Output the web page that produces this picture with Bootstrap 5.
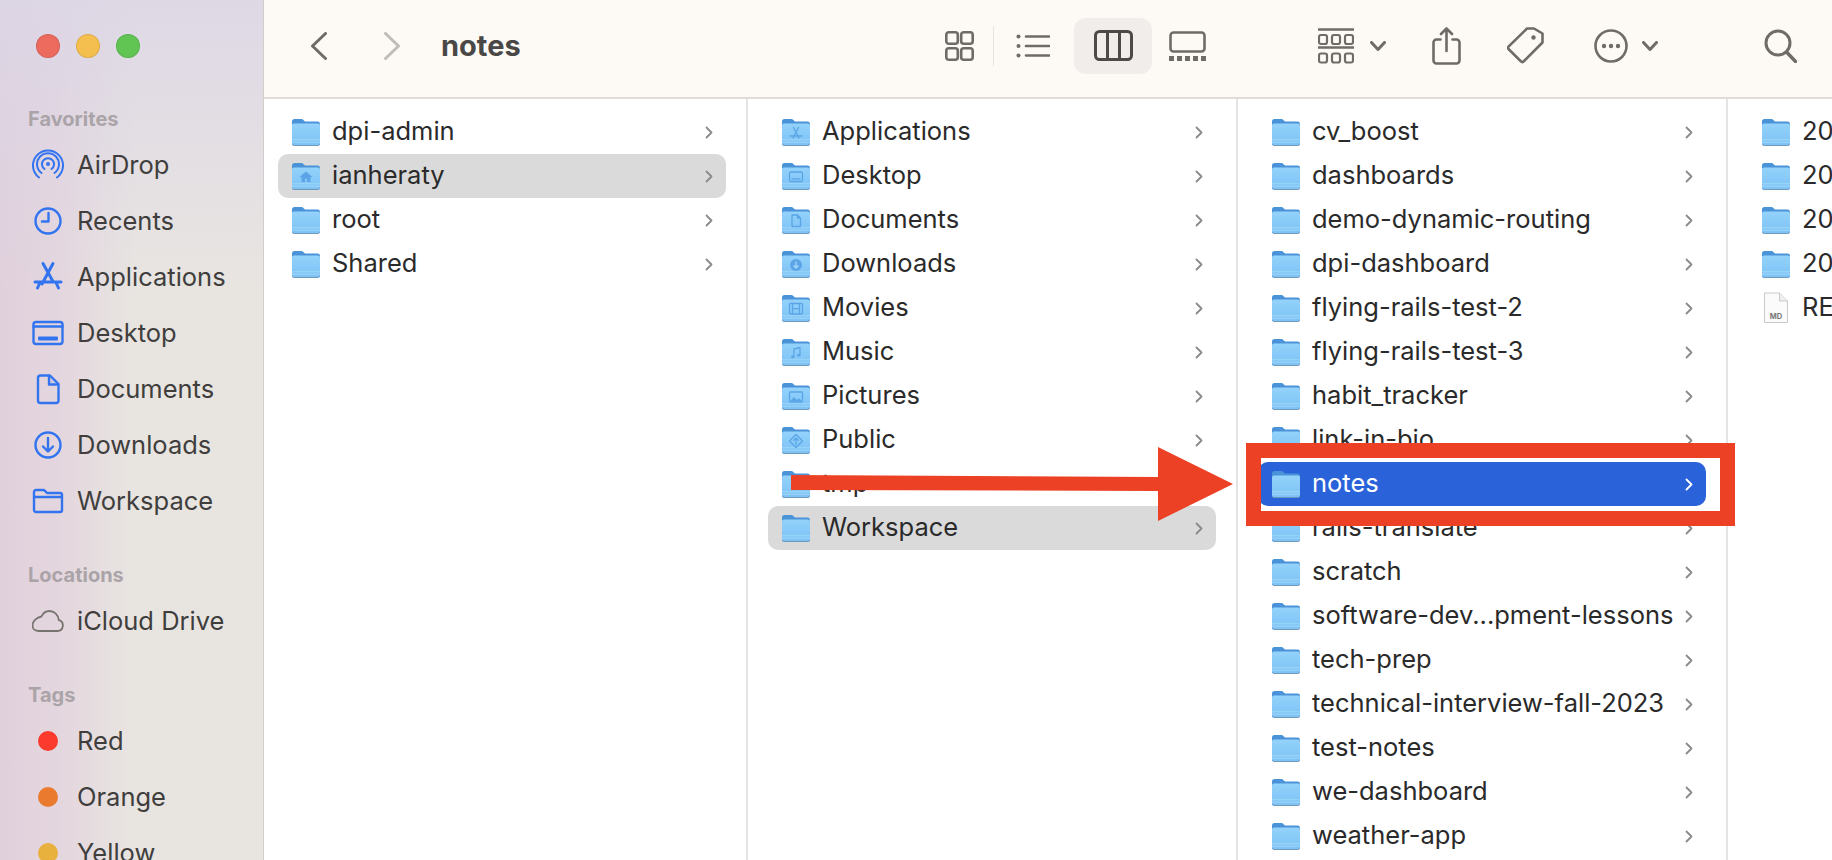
<!DOCTYPE html>
<html lang="en">
<head>
  <meta charset="UTF-8">
  <title>notes</title>
  <link href="https://cdn.jsdelivr.net/npm/bootstrap@5.3.3/dist/css/bootstrap.min.css" rel="stylesheet">
  <style>
    html, body { height: 860px; overflow: hidden; background: #fff; }
    body { position: relative; font-family: Inter, "Liberation Sans", sans-serif; font-size: 25.5px; color: #2a2a2a; }

    /* sidebar */
    .side-pane {
      width: 264px; flex: none; height: 860px; overflow: hidden;
      border-right: 1px solid #d0cecb; color: #403e3d;
      background:
        linear-gradient(180deg, rgba(220,214,230,.85) 0, rgba(226,210,220,0) 34%),
        linear-gradient(90deg, #e0d0dc 0, #e4d6de 60px, #e8e5e1 135px);
    }
    .lights { padding: 34px 0 0 36px; gap: 16px; margin-bottom: 47px; }
    .light { width: 24px; height: 24px; border-radius: 50%; border: 1px solid rgba(0,0,0,.1); }
    .light-r { background: #ed6a5e; }
    .light-y { background: #f5bf4f; }
    .light-g { background: #61c554; }
    .side-label { height: 28px; line-height: 28px; padding-left: 28px; font-size: 20px; font-weight: 700; color: #aaa4a8; margin-bottom: 4px; }
    .side-label-next { margin-top: 32px; }
    .side-row { height: 56px; padding-left: 32px; gap: 13px; white-space: nowrap; }
    .side-row svg { flex: none; }
    .tag-dot { width: 20px; height: 20px; border-radius: 50%; margin: 0 6px; flex: none; }
    .tag-red { background: #fc3a2e; }
    .tag-orange { background: #e97a2e; }
    .tag-yellow { background: #e8b03c; }
    .side-ic { fill: none; stroke: #3274f0; stroke-width: 2.4; stroke-linecap: round; stroke-linejoin: round; }

    /* toolbar */
    .top-bar { height: 99px; flex: none; background: #fdfaf6; border-bottom: 2px solid #dfddda; padding: 0 0 6px 47px; }
    .top-bar svg { flex: none; }
    .tb-line { fill: none; stroke: #6f6b66; stroke-width: 2.6; stroke-linecap: round; stroke-linejoin: round; }
    .tb-fill { fill: #6f6b66; }
    .tb-title { font-size: 29px; font-weight: 700; color: #4a4846; width: 78px; margin-left: 41px; margin-right: 426px; line-height: 1; }
    .tb-sep { width: 1px; height: 40px; background: #e6e3df; margin: 0 22px 0 19px; flex: none; }
    .tb-active { width: 78px; height: 56px; border-radius: 12px; background: #f0edea; margin-left: 24px; }
    .mg-14 { margin-left: 14px; }
    .mg-16 { margin-left: 16px; }
    .mg-17 { margin-left: 17px; }
    .mg-46 { margin-left: 46px; }
    .mg-50 { margin-left: 50px; }
    .mg-57 { margin-left: 57px; }
    .mg-106 { margin-left: 106px; }
    .mg-112 { margin-left: 112px; }

    /* columns */
    .col-pane { width: 490px; flex: none; padding-top: 11px; border-right: 2px solid #e4e4e4; height: 761px; overflow: hidden; }
    .col-first { width: 484px; }
    .col-last { flex: 1 1 auto; width: auto; border-right: 0; }
    .file-row { height: 44px; margin: 0 20px; padding: 0 13px 0 14px; border-radius: 10px; white-space: nowrap; }
    .col-first .file-row { margin-left: 14px; }
    .file-row > svg:first-child { flex: none; margin-right: 12px; }
    .file-name { flex: 1 1 auto; min-width: 0; overflow: hidden; padding-bottom: 2px; }
    .row-gray { background: #dadada; }
    .row-blue { background: #2962d9; color: #fff; }
    .row-blue .arrow-next { stroke: #fff; }
    .arrow-next { fill: none; stroke: #8a8a8a; stroke-width: 1.8; stroke-linecap: round; stroke-linejoin: round; flex: none; }
    .glyph { fill: none; stroke: #5ba5e6; stroke-width: 1.3; stroke-linejoin: round; stroke-linecap: round; }
    .glyph-fill { fill: #5ba5e6; }

    /* red annotation on top of the window */
    .markup { position: absolute; left: 0; top: 0; pointer-events: none; }
  </style>
</head>
<body>
  <svg width="0" height="0" class="position-absolute">
    <defs>
      <linearGradient id="fbody" x1="0" y1="0" x2="0" y2="1">
        <stop offset="0" stop-color="#93d2fb"/>
        <stop offset="1" stop-color="#7cc2f5"/>
      </linearGradient>
      <symbol id="folder" viewBox="0 0 28 28">
        <path d="M0 3.500A2.500 2.500 0 0 1 2.500 1H9c1.200 0 1.800.5 2.600 1.300L13 3.600h12.600A2.400 2.400 0 0 1 28 6v19.400a2.400 2.400 0 0 1-2.400 2.400H2.400A2.400 2.400 0 0 1 0 25.400z" fill="#4a93d8"/>
        <path d="M0 7.500a2 2 0 0 1 2-2h24a2 2 0 0 1 2 2v17.700a2.200 2.200 0 0 1-2.200 2.200H2.200A2.200 2.200 0 0 1 0 25.200z" fill="url(#fbody)"/>
        <path d="M0 21.800h28M0 24.200h28" stroke="#a9dafb" stroke-width=".8"/>
        <path d="M.4 26.400c.4.900 1 1.200 2 1.200h23.200c1 0 1.600-.3 2-1.200" fill="none" stroke="#6f93b3" stroke-width=".9"/>
      </symbol>
      <symbol id="next" viewBox="0 0 8 13">
        <path d="M1.500 1.500 6.500 6.500 1.500 11.500"/>
      </symbol>
    </defs>
  </svg>

  <div class="d-flex">
    <div class="side-pane">
      <div class="lights d-flex">
        <div class="light light-r"></div>
        <div class="light light-y"></div>
        <div class="light light-g"></div>
      </div>

      <div class="side-label">Favorites</div>
      <div class="side-row d-flex align-items-center">
        <svg class="side-ic" width="32" height="32" viewBox="0 0 32 32"><circle cx="16" cy="15" r="2" fill="#3274f0" stroke="none"/><path d="M12.500 21a6 6 0 1 1 7 0M9.500 25a11 11 0 1 1 13 0M7 29.500a15 15 0 1 1 18 0" transform="translate(0 -1)" stroke-width="2"/></svg>
        <span>AirDrop</span>
      </div>
      <div class="side-row d-flex align-items-center">
        <svg class="side-ic" width="32" height="32" viewBox="0 0 32 32"><circle cx="16" cy="16" r="12.500"/><path d="M16.500 8v8.500H10"/></svg>
        <span>Recents</span>
      </div>
      <div class="side-row d-flex align-items-center">
        <svg class="side-ic" width="32" height="32" viewBox="0 0 32 32"><path d="M11 2.500 21 20.500M21 2.500 10 23M3 21h26M8 21.500 5.500 27M24 21.500l2.500 5.500" stroke-width="3"/></svg>
        <span>Applications</span>
      </div>
      <div class="side-row d-flex align-items-center">
        <svg class="side-ic" width="32" height="32" viewBox="0 0 32 32"><rect x="1.500" y="5" width="29" height="22" rx="2.500"/><path d="M1.500 9.500h29"/><rect x="6" y="19.500" width="20" height="4" rx="1" fill="#3274f0" stroke="none"/></svg>
        <span>Desktop</span>
      </div>
      <div class="side-row d-flex align-items-center">
        <svg class="side-ic" width="32" height="32" viewBox="0 0 32 32"><path d="M6 5a2.500 2.500 0 0 1 2.500-2.500H18L26.500 11v16.500A2.500 2.500 0 0 1 24 30H8.500A2.500 2.500 0 0 1 6 27.500z"/><path d="M17 3v8.500h9" fill="#3274f0" fill-opacity=".12"/></svg>
        <span>Documents</span>
      </div>
      <div class="side-row d-flex align-items-center">
        <svg class="side-ic" width="32" height="32" viewBox="0 0 32 32"><circle cx="16" cy="16" r="12.500"/><path d="M16 9v13M11 17.500l5 5 5-5"/></svg>
        <span>Downloads</span>
      </div>
      <div class="side-row d-flex align-items-center">
        <svg class="side-ic" width="32" height="32" viewBox="0 0 32 32"><path d="M2 7a2 2 0 0 1 2-2h7c1 0 1.500.4 2.200 1.100L15 8h13a2 2 0 0 1 2 2v15a2 2 0 0 1-2 2H4a2 2 0 0 1-2-2zM2 12h28"/></svg>
        <span>Workspace</span>
      </div>

      <div class="side-label side-label-next">Locations</div>
      <div class="side-row d-flex align-items-center">
        <svg width="32" height="32" viewBox="0 0 32 32" fill="none" stroke="#77736f" stroke-width="1.800" stroke-linejoin="round"><path d="M7 26h18.500a5.500 5.500 0 0 0 1.300-10.800C26.300 9.500 21.800 6 17.500 6c-3.700 0-6.500 2-8 5.500C5 12.500 .500 16 .500 20.500 .500 24 3.300 26 7 26z"/></svg>
        <span>iCloud Drive</span>
      </div>

      <div class="side-label side-label-next">Tags</div>
      <div class="side-row d-flex align-items-center"><div class="tag-dot tag-red"></div><span>Red</span></div>
      <div class="side-row d-flex align-items-center"><div class="tag-dot tag-orange"></div><span>Orange</span></div>
      <div class="side-row d-flex align-items-center"><div class="tag-dot tag-yellow"></div><span>Yellow</span></div>
    </div>

    <div class="flex-grow-1 d-flex flex-column">
      <div class="top-bar d-flex align-items-center">
        <svg class="tb-line" width="16" height="28" viewBox="0 0 16 28"><path d="M14.500 1.500 1.500 14l13 12.500" stroke-width="3"/></svg>
        <svg class="mg-57" width="16" height="28" viewBox="0 0 16 28"><path d="M1.500 1.500 14.500 14l-13 12.500" fill="none" stroke="#c0bdb9" stroke-width="3" stroke-linecap="round" stroke-linejoin="round"/></svg>
        <div class="tb-title">notes</div>

        <svg class="tb-line" width="29" height="30" viewBox="0 0 29 30"><rect x="1.300" y="1.300" width="11.500" height="11.500" rx="2.500"/><rect x="16.200" y="1.300" width="11.500" height="11.500" rx="2.500"/><rect x="1.300" y="17.200" width="11.500" height="11.500" rx="2.500"/><rect x="16.200" y="17.200" width="11.500" height="11.500" rx="2.500"/></svg>
        <div class="tb-sep"></div>
        <svg class="tb-line" width="34" height="24" viewBox="0 0 34 24"><circle class="tb-fill" cx="2.500" cy="2.500" r="2" stroke="none"/><circle class="tb-fill" cx="2.500" cy="12" r="2" stroke="none"/><circle class="tb-fill" cx="2.500" cy="21.500" r="2" stroke="none"/><path d="M10 2.500h23M10 12h23M10 21.500h23"/></svg>
        <div class="tb-active d-flex align-items-center justify-content-center">
          <svg width="39" height="31" viewBox="0 0 39 31" fill="none" stroke="#4d4a47" stroke-width="3"><rect x="1.500" y="1.500" width="36" height="28" rx="4"/><path d="M13.500 1.500v28M25.500 1.500v28"/></svg>
        </div>
        <svg class="tb-line mg-17" width="37" height="30" viewBox="0 0 37 30"><rect x="1.500" y="1.500" width="34" height="19" rx="3"/><g class="tb-fill" stroke="none"><rect x="0" y="25" width="5" height="5"/><rect x="8" y="25" width="5" height="5"/><rect x="16" y="25" width="5" height="5"/><rect x="24" y="25" width="5" height="5"/><rect x="32" y="25" width="5" height="5"/></g></svg>

        <svg class="tb-line mg-112" width="36" height="36" viewBox="0 0 36 36"><path d="M0 1.500h36M0 19.500h36"/><rect x="1" y="7" width="8" height="9" rx="2" stroke-width="2.200"/><rect x="14" y="7" width="8" height="9" rx="2" stroke-width="2.200"/><rect x="27" y="7" width="8" height="9" rx="2" stroke-width="2.200"/><rect x="1" y="25.500" width="8" height="9" rx="2" stroke-width="2.200"/><rect x="14" y="25.500" width="8" height="9" rx="2" stroke-width="2.200"/><rect x="27" y="25.500" width="8" height="9" rx="2" stroke-width="2.200"/></svg>
        <svg class="tb-line mg-16" width="16" height="10" viewBox="0 0 16 10"><path d="M1.500 1.500 8 8.500l6.500-7" stroke-width="3"/></svg>

        <svg class="tb-line mg-46" width="29" height="38" viewBox="0 0 29 38"><path d="M8.500 12.500H4.500a3 3 0 0 0-3 3V33.500a3 3 0 0 0 3 3h20a3 3 0 0 0 3-3V15.500a3 3 0 0 0-3-3h-4M14.500 24V1.500M9 7l5.500-5.500L20 7"/></svg>
        <svg class="tb-line mg-46" width="37" height="37" viewBox="0 0 37 37"><path d="M20 1.500h7l8.500 5v9l-19 19c-.8.8-1.700.8-2.400 0L1.500 22c-.7-.8-.7-1.700 0-2.400z"/><circle class="tb-fill" cx="26.500" cy="10.500" r="2.200" stroke="none"/></svg>
        <svg class="tb-line mg-50" width="34" height="34" viewBox="0 0 34 34"><circle cx="17" cy="17" r="15.500"/><g class="tb-fill" stroke="none"><circle cx="10" cy="17" r="2.200"/><circle cx="17" cy="17" r="2.200"/><circle cx="24" cy="17" r="2.200"/></g></svg>
        <svg class="tb-line mg-14" width="16" height="10" viewBox="0 0 16 10"><path d="M1.500 1.500 8 8.500l6.500-7" stroke-width="3"/></svg>
        <svg class="tb-line mg-106" width="33" height="34" viewBox="0 0 33 34"><circle cx="14" cy="14" r="12" stroke-width="3"/><path d="M23 23.500l8.500 9" stroke-width="3.400"/></svg>
      </div>

      <div class="d-flex flex-grow-1">
        <div class="col-pane col-first">
          <div class="file-row d-flex align-items-center"><svg width="28" height="28"><use href="#folder"/></svg><span class="file-name">dpi-admin</span><svg class="arrow-next" width="8" height="13"><use href="#next"/></svg></div>
          <div class="file-row row-gray d-flex align-items-center"><svg width="28" height="28" viewBox="0 0 28 28"><use href="#folder" width="28" height="28"/><path class="glyph-fill" d="M14 9.500 7.500 15H9.500v5h3.500v-3.200h2V20h3.500v-5h2z"/></svg><span class="file-name">ianheraty</span><svg class="arrow-next" width="8" height="13"><use href="#next"/></svg></div>
          <div class="file-row d-flex align-items-center"><svg width="28" height="28"><use href="#folder"/></svg><span class="file-name">root</span><svg class="arrow-next" width="8" height="13"><use href="#next"/></svg></div>
          <div class="file-row d-flex align-items-center"><svg width="28" height="28"><use href="#folder"/></svg><span class="file-name">Shared</span><svg class="arrow-next" width="8" height="13"><use href="#next"/></svg></div>
        </div>

        <div class="col-pane">
          <div class="file-row d-flex align-items-center"><svg width="28" height="28" viewBox="0 0 28 28"><use href="#folder" width="28" height="28"/><path class="glyph" d="M11.500 9.500 17 20M16.500 9.500 11 20M8 18h12"/></svg><span class="file-name">Applications</span><svg class="arrow-next" width="8" height="13"><use href="#next"/></svg></div>
          <div class="file-row d-flex align-items-center"><svg width="28" height="28" viewBox="0 0 28 28"><use href="#folder" width="28" height="28"/><rect class="glyph" x="7.500" y="10" width="13" height="9.500" rx="1.500"/><path class="glyph" d="M10 16.800h8"/></svg><span class="file-name">Desktop</span><svg class="arrow-next" width="8" height="13"><use href="#next"/></svg></div>
          <div class="file-row d-flex align-items-center"><svg width="28" height="28" viewBox="0 0 28 28"><use href="#folder" width="28" height="28"/><path class="glyph" d="M10 9h5.500l3 3v8.500H10zM15.500 9v3h3"/></svg><span class="file-name">Documents</span><svg class="arrow-next" width="8" height="13"><use href="#next"/></svg></div>
          <div class="file-row d-flex align-items-center"><svg width="28" height="28" viewBox="0 0 28 28"><use href="#folder" width="28" height="28"/><circle class="glyph-fill" cx="14" cy="15" r="6"/><path d="M14 11.500v6.500M11.500 15.500 14 18l2.500-2.500" fill="none" stroke="#a3d8fb" stroke-width="1.300"/></svg><span class="file-name">Downloads</span><svg class="arrow-next" width="8" height="13"><use href="#next"/></svg></div>
          <div class="file-row d-flex align-items-center"><svg width="28" height="28" viewBox="0 0 28 28"><use href="#folder" width="28" height="28"/><rect class="glyph" x="7.500" y="9.500" width="13" height="10.500" rx="1"/><path class="glyph" d="M10.500 9.500V20M17.500 9.500V20M10.500 14.700h7"/></svg><span class="file-name">Movies</span><svg class="arrow-next" width="8" height="13"><use href="#next"/></svg></div>
          <div class="file-row d-flex align-items-center"><svg width="28" height="28" viewBox="0 0 28 28"><use href="#folder" width="28" height="28"/><path class="glyph" d="M12 18.500V11l6-1.500V17"/><circle class="glyph-fill" cx="10.700" cy="18.700" r="1.500"/><circle class="glyph-fill" cx="16.700" cy="17.200" r="1.500"/></svg><span class="file-name">Music</span><svg class="arrow-next" width="8" height="13"><use href="#next"/></svg></div>
          <div class="file-row d-flex align-items-center"><svg width="28" height="28" viewBox="0 0 28 28"><use href="#folder" width="28" height="28"/><rect class="glyph" x="7.500" y="10" width="13" height="10" rx="1"/><path class="glyph-fill" d="M8 19.500l4-4.500 3 3 2-1.800 3 3.300z"/></svg><span class="file-name">Pictures</span><svg class="arrow-next" width="8" height="13"><use href="#next"/></svg></div>
          <div class="file-row d-flex align-items-center"><svg width="28" height="28" viewBox="0 0 28 28"><use href="#folder" width="28" height="28"/><path class="glyph" d="M14 8.500l6.500 6.500-6.500 6.500L7.500 15zM14 18.500v-6.500M11.800 14.200 14 12l2.200 2.200"/></svg><span class="file-name">Public</span><svg class="arrow-next" width="8" height="13"><use href="#next"/></svg></div>
          <div class="file-row d-flex align-items-center"><svg width="28" height="28"><use href="#folder"/></svg><span class="file-name">tmp</span><svg class="arrow-next" width="8" height="13"><use href="#next"/></svg></div>
          <div class="file-row row-gray d-flex align-items-center"><svg width="28" height="28"><use href="#folder"/></svg><span class="file-name">Workspace</span><svg class="arrow-next" width="8" height="13"><use href="#next"/></svg></div>
        </div>

        <div class="col-pane">
          <div class="file-row d-flex align-items-center"><svg width="28" height="28"><use href="#folder"/></svg><span class="file-name">cv_boost</span><svg class="arrow-next" width="8" height="13"><use href="#next"/></svg></div>
          <div class="file-row d-flex align-items-center"><svg width="28" height="28"><use href="#folder"/></svg><span class="file-name">dashboards</span><svg class="arrow-next" width="8" height="13"><use href="#next"/></svg></div>
          <div class="file-row d-flex align-items-center"><svg width="28" height="28"><use href="#folder"/></svg><span class="file-name">demo-dynamic-routing</span><svg class="arrow-next" width="8" height="13"><use href="#next"/></svg></div>
          <div class="file-row d-flex align-items-center"><svg width="28" height="28"><use href="#folder"/></svg><span class="file-name">dpi-dashboard</span><svg class="arrow-next" width="8" height="13"><use href="#next"/></svg></div>
          <div class="file-row d-flex align-items-center"><svg width="28" height="28"><use href="#folder"/></svg><span class="file-name">flying-rails-test-2</span><svg class="arrow-next" width="8" height="13"><use href="#next"/></svg></div>
          <div class="file-row d-flex align-items-center"><svg width="28" height="28"><use href="#folder"/></svg><span class="file-name">flying-rails-test-3</span><svg class="arrow-next" width="8" height="13"><use href="#next"/></svg></div>
          <div class="file-row d-flex align-items-center"><svg width="28" height="28"><use href="#folder"/></svg><span class="file-name">habit_tracker</span><svg class="arrow-next" width="8" height="13"><use href="#next"/></svg></div>
          <div class="file-row d-flex align-items-center"><svg width="28" height="28"><use href="#folder"/></svg><span class="file-name">link-in-bio</span><svg class="arrow-next" width="8" height="13"><use href="#next"/></svg></div>
          <div class="file-row row-blue d-flex align-items-center"><svg width="28" height="28"><use href="#folder"/></svg><span class="file-name">notes</span><svg class="arrow-next" width="8" height="13"><use href="#next"/></svg></div>
          <div class="file-row d-flex align-items-center"><svg width="28" height="28"><use href="#folder"/></svg><span class="file-name">rails-translate</span><svg class="arrow-next" width="8" height="13"><use href="#next"/></svg></div>
          <div class="file-row d-flex align-items-center"><svg width="28" height="28"><use href="#folder"/></svg><span class="file-name">scratch</span><svg class="arrow-next" width="8" height="13"><use href="#next"/></svg></div>
          <div class="file-row d-flex align-items-center"><svg width="28" height="28"><use href="#folder"/></svg><span class="file-name">software-dev...pment-lessons</span><svg class="arrow-next" width="8" height="13"><use href="#next"/></svg></div>
          <div class="file-row d-flex align-items-center"><svg width="28" height="28"><use href="#folder"/></svg><span class="file-name">tech-prep</span><svg class="arrow-next" width="8" height="13"><use href="#next"/></svg></div>
          <div class="file-row d-flex align-items-center"><svg width="28" height="28"><use href="#folder"/></svg><span class="file-name">technical-interview-fall-2023</span><svg class="arrow-next" width="8" height="13"><use href="#next"/></svg></div>
          <div class="file-row d-flex align-items-center"><svg width="28" height="28"><use href="#folder"/></svg><span class="file-name">test-notes</span><svg class="arrow-next" width="8" height="13"><use href="#next"/></svg></div>
          <div class="file-row d-flex align-items-center"><svg width="28" height="28"><use href="#folder"/></svg><span class="file-name">we-dashboard</span><svg class="arrow-next" width="8" height="13"><use href="#next"/></svg></div>
          <div class="file-row d-flex align-items-center"><svg width="28" height="28"><use href="#folder"/></svg><span class="file-name">weather-app</span><svg class="arrow-next" width="8" height="13"><use href="#next"/></svg></div>
        </div>

        <div class="col-pane col-last">
          <div class="file-row d-flex align-items-center"><svg width="28" height="28"><use href="#folder"/></svg><span class="file-name">20</span></div>
          <div class="file-row d-flex align-items-center"><svg width="28" height="28"><use href="#folder"/></svg><span class="file-name">20</span></div>
          <div class="file-row d-flex align-items-center"><svg width="28" height="28"><use href="#folder"/></svg><span class="file-name">20</span></div>
          <div class="file-row d-flex align-items-center"><svg width="28" height="28"><use href="#folder"/></svg><span class="file-name">20</span></div>
          <div class="file-row d-flex align-items-center"><svg width="28" height="32" viewBox="0 0 28 32"><path d="M2.500 1h15L25.500 9v21.500h-23z" fill="#fbfbfb" stroke="#c9c9c9"/><path d="M17.500 1v8h8" fill="#eee" stroke="#c9c9c9"/><text x="14" y="27" text-anchor="middle" font-size="7.500" font-weight="700" fill="#777">MD</text></svg><span class="file-name">RE</span></div>
        </div>
      </div>
    </div>
  </div>

  <svg class="markup" width="1832" height="860" viewBox="0 0 1832 860">
    <rect x="1253.500" y="450.500" width="474" height="68" fill="none" stroke="#ec4125" stroke-width="15"/>
    <path d="M791 475 1158 477V447L1233 484 1158 521V491L791 490z" fill="#ec4125"/>
  </svg>
</body>
</html>
